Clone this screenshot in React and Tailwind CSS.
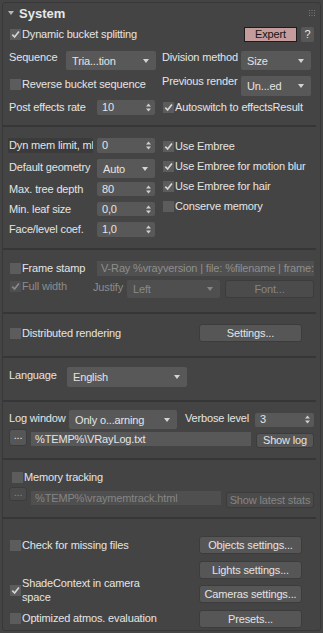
import React from "react";

const Tick = ({ color }) => (
  <svg width="9" height="9" viewBox="0 0 9 9">
    <path d="M1.3 4.6 L3.6 7 L7.9 1.4" fill="none" stroke={color} strokeWidth="1.7" />
  </svg>
);

function Checkbox({ checked, disabled, label, className = "", labelClass = "" }) {
  return (
    <div className={`flex items-center ${className}`}>
      <span
        className={`flex h-[11px] w-[11px] shrink-0 items-center justify-center ${
          disabled ? "bg-[#4f4f4f]" : "bg-[#5c5c5c]"
        }`}
      >
        {checked && <Tick color={disabled ? "#8a8a8a" : "#d4d4d4"} />}
      </span>
      <span
        className={`ml-[1px] whitespace-nowrap ${
          disabled ? "text-[#8c8c8c]" : "text-[#e4e4e4]"
        } ${labelClass}`}
      >
        {label}
      </span>
    </div>
  );
}

function Dropdown({ value, disabled, className = "" }) {
  return (
    <div
      className={`flex shrink-0 items-center justify-between rounded-[2px] pl-[6px] pr-[7px] ${
        disabled ? "bg-[#4f4f4f] text-[#8a8a8a]" : "bg-[#585858] text-[#e4e4e4]"
      } ${className}`}
    >
      <span className="whitespace-nowrap pt-[1px]">{value}</span>
      <svg width="6" height="4" viewBox="0 0 6 4">
        <path d="M0 0H6L3 4Z" fill={disabled ? "#858585" : "#d4d4d4"} />
      </svg>
    </div>
  );
}

function Spinner({ value, className = "" }) {
  return (
    <div
      className={`flex shrink-0 items-center justify-between rounded-[2px] bg-[#585858] pl-[5px] pr-[4px] text-[#e4e4e4] ${className}`}
    >
      <span className="whitespace-nowrap">{value}</span>
      <svg width="5" height="9" viewBox="0 0 5 9">
        <path d="M0 3.6H5L2.5 0.4Z M0 5.4H5L2.5 8.6Z" fill="#cfcfcf" />
      </svg>
    </div>
  );
}

function Btn({ children, disabled, className = "" }) {
  return (
    <div
      className={`flex shrink-0 items-center justify-center whitespace-nowrap rounded-[3px] border border-[#3c3c3c] ${
        disabled ? "bg-[#4b4b4b] text-[#858585]" : "bg-[#565656] text-[#e4e4e4]"
      } ${className}`}
    >
      {children}
    </div>
  );
}

const Sep = ({ className = "" }) => (
  <div className={`ml-[-6px] mr-[-2px] h-[2px] shrink-0 bg-[#363636] ${className}`} />
);

const Label = ({ children, className = "" }) => (
  <span className={`shrink-0 whitespace-nowrap text-[#e4e4e4] ${className}`}>{children}</span>
);

export default function App() {
  return (
    <div className="h-[633px] w-[323px] bg-[#444444] p-[2px] font-['Liberation_Sans',Arial,sans-serif] text-[11px] leading-none tracking-[-0.15px]">
      <div className="flex h-[629px] flex-col rounded-[3px] border border-[#383838] px-[6px]">
        {/* header */}
        <div className="flex h-[20px] shrink-0 items-center">
          <svg width="6" height="4" viewBox="0 0 6 4" className="ml-[-1px]">
            <path d="M0 0H6L3 4Z" fill="#b8b8b8" />
          </svg>
          <span className="ml-[5px] text-[13px] font-bold tracking-normal text-[#e8e8e8]">System</span>
          <svg width="6" height="6" viewBox="0 0 6 6" className="ml-auto mr-[-1px]">
            {[0, 2.5, 5].map((y) =>
              [0, 2.5, 5].map((x) => (
                <rect key={`${x}-${y}`} x={x} y={y} width="1" height="1" fill="#7a7a7a" />
              ))
            )}
          </svg>
        </div>

        {/* bucket rows */}
        <div className="mt-[4px] flex h-[15px] shrink-0 items-center">
          <Checkbox checked label="Dynamic bucket splitting" className="ml-[1px]" />
          <div className="ml-auto flex h-[15px] w-[53px] items-center justify-center border border-[#1c1c1c] bg-[#c49c9c] text-[#141414]">
            Expert
          </div>
          <div className="ml-[4px] flex h-[15px] w-[13px] items-center justify-center rounded-[2px] bg-[#575757] text-[#e4e4e4]">
            ?
          </div>
        </div>

        <div className="mt-[9px] flex h-[19px] shrink-0 items-center">
          <Label className="w-[57px] pb-[6px]">Sequence</Label>
          <Dropdown value="Tria...tion" className="h-[19px] w-[90px]" />
          <Label className="ml-[6px] w-[79px] pb-[6px]">Division method</Label>
          <Dropdown value="Size" className="h-[19px] w-[70px]" />
        </div>

        <div className="mt-[6px] flex h-[20px] shrink-0 items-center">
          <Checkbox label="Reverse bucket sequence" className="ml-[1px] w-[152px] pb-[4px]" />
          <Label className="w-[79px] pb-[10px]">Previous render</Label>
          <Dropdown value="Un...ed" className="h-[20px] w-[70px]" />
        </div>

        <div className="mt-[4px] flex h-[15px] shrink-0 items-center">
          <Label className="w-[88px]">Post effects rate</Label>
          <Spinner value="10" className="h-[15px] w-[58px]" />
          <Checkbox checked label="Autoswitch to effectsResult" className="ml-[8px]" />
        </div>

        <Sep className="mt-[10px]" />

        {/* geometry */}
        <div className="flex shrink-0">
          <div className="mt-[11px] flex w-[146px] flex-col">
            <div className="flex h-[15px] items-center">
              <span className="ml-[-1px] flex h-[15px] w-[85px] shrink-0 items-center overflow-hidden whitespace-nowrap bg-[#3b3b3b] pl-[1px] text-[#e4e4e4]">
                Dyn mem limit, mb
              </span>
              <Spinner value="0" className="ml-[4px] h-[15px] w-[58px]" />
            </div>
            <div className="mt-[6px] flex h-[19px] items-center">
              <Label className="w-[88px] pb-[3px]">Default geometry</Label>
              <Dropdown value="Auto" className="h-[19px] w-[58px]" />
            </div>
            <div className="mt-[4px] flex h-[14px] items-center">
              <Label className="w-[88px]">Max. tree depth</Label>
              <Spinner value="80" className="h-[14px] w-[58px]" />
            </div>
            <div className="mt-[6px] flex h-[14px] items-center">
              <Label className="w-[88px]">Min. leaf size</Label>
              <Spinner value="0,0" className="h-[14px] w-[58px]" />
            </div>
            <div className="mt-[6px] flex h-[15px] items-center">
              <Label className="w-[88px]">Face/level coef.</Label>
              <Spinner value="1,0" className="h-[15px] w-[58px]" />
            </div>
          </div>
          <div className="ml-[8px] mt-[9px] flex flex-col">
            <Checkbox checked label="Use Embree" className="h-[20px]" />
            <Checkbox checked label="Use Embree for motion blur" className="h-[20px]" />
            <Checkbox checked label="Use Embree for hair" className="h-[20px]" />
            <Checkbox label="Conserve memory" className="h-[20px]" />
          </div>
        </div>

        <Sep className="mt-[11px]" />

        {/* frame stamp */}
        <div className="mt-[11px] flex h-[15px] shrink-0 items-center">
          <Checkbox label="Frame stamp" className="ml-[1px] w-[87px] shrink-0" />
          <div className="flex h-[15px] min-w-0 flex-1 items-center overflow-hidden whitespace-nowrap bg-[#505050] pl-[4px] text-[#8e8e8e]">
            V-Ray %vrayversion | file: %filename | frame: %frame
          </div>
        </div>
        <div className="mt-[4px] flex h-[18px] shrink-0 items-center">
          <Checkbox checked disabled label="Full width" className="ml-[1px] w-[83px] pb-[6px]" />
          <span className="w-[34px] shrink-0 pb-[3px] text-[#8c8c8c]">Justify</span>
          <Dropdown disabled value="Left" className="h-[18px] w-[93px]" />
          <Btn disabled className="ml-[5px] h-[18px] flex-1">
            Font...
          </Btn>
        </div>

        <Sep className="mt-[14px]" />

        <div className="mt-[10px] flex h-[18px] shrink-0 items-center">
          <Checkbox label="Distributed rendering" className="ml-[1px]" />
          <Btn className="ml-auto mr-[12px] h-[18px] w-[103px]">Settings...</Btn>
        </div>

        <Sep className="mt-[14px]" />

        <div className="mt-[9px] flex h-[20px] shrink-0 items-center">
          <Label className="w-[58px] pb-[4px]">Language</Label>
          <Dropdown value="English" className="h-[20px] w-[120px]" />
        </div>

        <Sep className="mt-[13px]" />

        {/* log */}
        <div className="mt-[8px] flex h-[19px] shrink-0 items-center">
          <Label className="w-[60px] pb-[2px]">Log window</Label>
          <Dropdown value="Only o...arning" className="h-[19px] w-[108px]" />
          <Label className="ml-[8px] w-[70px] pb-[2px]">Verbose level</Label>
          <Spinner value="3" className="h-[14px] w-[59px]" />
        </div>
        <div className="flex h-[19px] shrink-0 items-start">
          <Btn className="h-[17px] w-[18px] pb-[4px]">...</Btn>
          <div className="ml-[4px] mt-[3px] flex h-[14px] w-[220px] items-center bg-[#585858] pl-[4px] text-[#e4e4e4]">
            %TEMP%\VRayLog.txt
          </div>
          <Btn className="ml-[5px] mt-[4px] h-[15px] flex-1">Show log</Btn>
        </div>

        <Sep className="mt-[10px]" />

        {/* memory */}
        <div className="mt-[11px] flex h-[12px] shrink-0 items-center">
          <Checkbox label="Memory tracking" className="ml-[3px]" />
        </div>
        <div className="mt-[4px] flex h-[21px] shrink-0 items-start">
          <Btn disabled className="h-[14px] w-[18px] pb-[4px]">
            ...
          </Btn>
          <div className="ml-[4px] mt-[4px] flex h-[14px] w-[190px] items-center bg-[#4f4f4f] pl-[4px] text-[#858585]">
            %TEMP%\vraymemtrack.html
          </div>
          <Btn disabled className="ml-[5px] mt-[5px] h-[16px] flex-1">
            Show latest stats
          </Btn>
        </div>

        <Sep className="mt-[9px]" />

        {/* misc */}
        <div className="flex shrink-0">
          <div className="flex flex-1 flex-col">
            <div className="mt-[17px] flex h-[18px] items-center">
              <Checkbox label="Check for missing files" className="ml-[1px]" />
            </div>
            <div className="ml-[1px] mt-[22px] flex items-center">
              <span className="flex h-[11px] w-[11px] shrink-0 items-center justify-center bg-[#5c5c5c]">
                <Tick color="#d4d4d4" />
              </span>
              <span className="ml-[1px] w-[125px] leading-[14px] text-[#e4e4e4]">
                ShadeContext in camera space
              </span>
            </div>
            <div className="mt-[5px] flex h-[18px] items-center">
              <Checkbox label="Optimized atmos. evaluation" className="ml-[1px]" />
            </div>
          </div>
          <div className="mr-[12px] mt-[17px] flex w-[103px] flex-col">
            <Btn className="h-[18px]">Objects settings...</Btn>
            <Btn className="mt-[7px] h-[18px]">Lights settings...</Btn>
            <Btn className="mt-[6px] h-[18px]">Cameras settings...</Btn>
            <Btn className="mt-[7px] h-[18px]">Presets...</Btn>
          </div>
        </div>
      </div>
    </div>
  );
}
